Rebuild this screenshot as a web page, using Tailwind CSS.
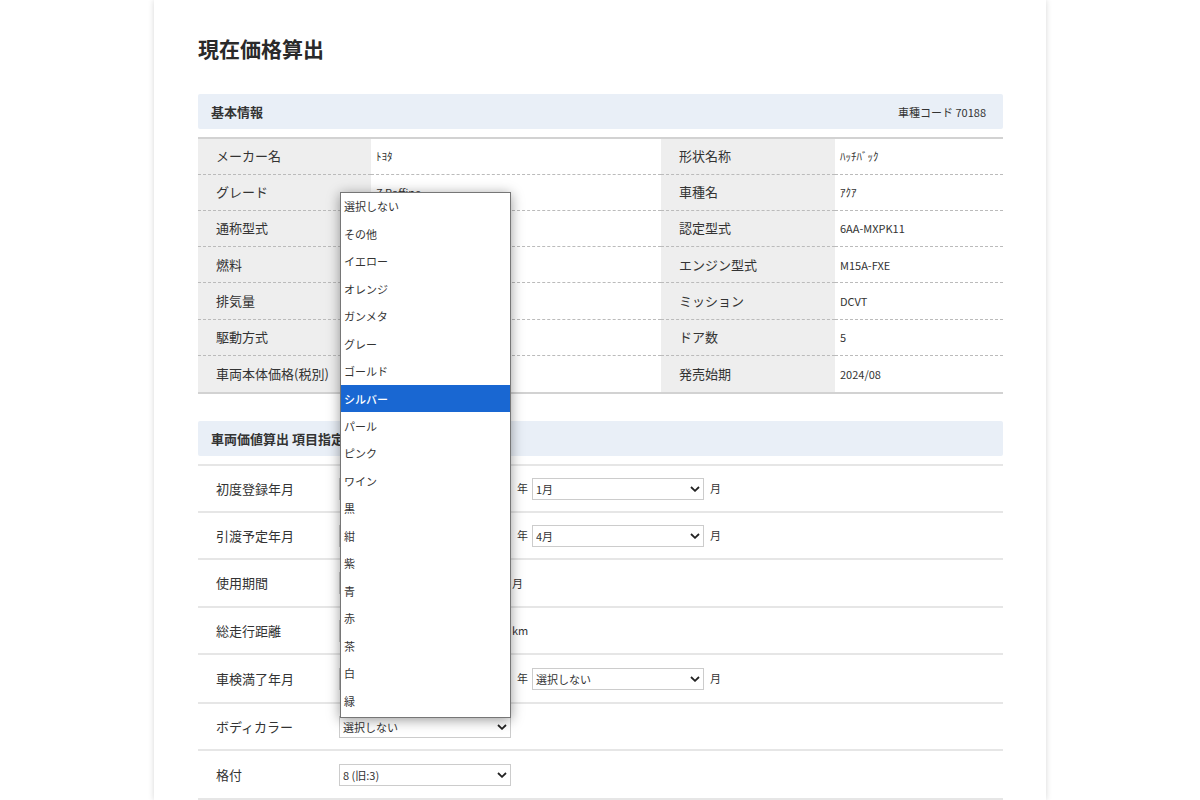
<!DOCTYPE html>
<html lang="ja">
<head>
<meta charset="utf-8">
<meta name="viewport" content="width=device-width, initial-scale=1">
<title>現在価格算出</title>
<script src="https://cdn.jsdelivr.net/npm/@tailwindcss/browser@4"></script>
</head>
<body class="bg-white font-['Noto_Sans_CJK_JP',sans-serif] text-[#333] text-[11px] leading-4">
<svg class="hidden"><symbol id="chevron" viewBox="0 0 10 6"><path d="M1 1l4 3.8L9 1" fill="none" stroke="#222" stroke-width="1.8"/></symbol></svg>
<main class="mx-auto max-w-[892px] overflow-hidden pl-11 pr-[43px] pt-8 shadow-[0_0_6px_rgba(0,0,0,0.16)]">
  <h1 class="text-[21px] leading-8 font-bold text-[#2a2a2a]">現在価格算出</h1>

  <section class="mt-[30px]">
    <div class="flex h-[35px] items-center justify-between rounded-xs bg-[#e9eff7] pl-[13px] pr-[17px]">
      <h2 class="text-[13px] font-bold">基本情報</h2>
      <p>車種コード 70188</p>
    </div>
    <table class="mt-2 h-[257px] w-full table-fixed border-collapse border-y-2 border-[#d2d2d2] text-left">
      <colgroup><col class="w-[173px]"><col><col class="w-[174px]"><col class="w-[168px]"></colgroup>
      <tbody class="[&_th]:bg-[#eeeeee] [&_th]:pl-[18px] [&_th]:text-[13px] [&_th]:font-normal [&_td]:pl-[5px] [&_tr]:border-b [&_tr]:border-dashed [&_tr]:border-[#bbb] [&_tr:last-child]:border-b-2 [&_tr:last-child]:border-solid [&_tr:last-child]:border-[#d2d2d2]">
        <tr class="h-9"><th scope="row">メーカー名</th><td>ﾄﾖﾀ</td><th scope="row">形状名称</th><td>ﾊｯﾁﾊﾞｯｸ</td></tr>
        <tr><th scope="row">グレード</th><td>Z Raffine</td><th scope="row">車種名</th><td>ｱｸｱ</td></tr>
        <tr><th scope="row">通称型式</th><td></td><th scope="row">認定型式</th><td>6AA-MXPK11</td></tr>
        <tr><th scope="row">燃料</th><td></td><th scope="row">エンジン型式</th><td>M15A-FXE</td></tr>
        <tr><th scope="row">排気量</th><td></td><th scope="row">ミッション</th><td>DCVT</td></tr>
        <tr><th scope="row">駆動方式</th><td></td><th scope="row">ドア数</th><td>5</td></tr>
        <tr><th scope="row">車両本体価格(税別)</th><td></td><th scope="row">発売始期</th><td>2024/08</td></tr>
      </tbody>
    </table>
  </section>

  <section class="mt-[27px]">
    <div class="flex h-[35px] items-center rounded-xs bg-[#e9eff7] pl-[13px]">
      <h2 class="text-[13px] font-bold">車両価値算出 項目指定</h2>
    </div>
    <form class="mt-2 border-t-2 border-[#e6e6e6] [&>div]:flex [&>div]:items-center [&>div]:border-b-2 [&>div]:border-[#e6e6e6] [&>div>label]:w-[141px] [&>div>label]:shrink-0 [&>div>label]:pl-[18px] [&>div>label]:text-[13px] [&_select]:h-[22px] [&_select]:w-full [&_select]:appearance-none [&_select]:border [&_select]:border-[#ccc] [&_select]:bg-white [&_select]:pl-[3px] [&_input]:h-[22px] [&_input]:w-[172px] [&_input]:border [&_input]:border-[#ccc] [&_input]:pl-[3px]">
      <div class="h-[47px]">
        <label for="reg-year">初度登録年月</label>
        <span class="relative w-[172px]"><select id="reg-year"><option></option></select></span>
        <span class="mx-1 pb-[2px] pl-[2px]">年</span>
        <span class="relative w-[172px]"><select aria-label="初度登録月"><option>1月</option></select><svg class="pointer-events-none absolute right-1 top-2 h-[6px] w-[10px]"><use href="#chevron"/></svg></span>
        <span class="ml-[6px] pb-[2px]">月</span>
      </div>
      <div class="h-[47px]">
        <label for="del-year">引渡予定年月</label>
        <span class="relative w-[172px]"><select id="del-year"><option></option></select></span>
        <span class="mx-1 pb-[2px] pl-[2px]">年</span>
        <span class="relative w-[172px]"><select aria-label="引渡予定月"><option>4月</option></select><svg class="pointer-events-none absolute right-1 top-2 h-[6px] w-[10px]"><use href="#chevron"/></svg></span>
        <span class="ml-[6px] pb-[2px]">月</span>
      </div>
      <div class="h-[48px]">
        <label for="period">使用期間</label>
        <input id="period" type="text"><span class="ml-px">月</span>
      </div>
      <div class="h-[47px]">
        <label for="mileage">総走行距離</label>
        <input id="mileage" type="text"><span class="ml-px pb-[2px]">km</span>
      </div>
      <div class="h-[49px]">
        <label for="insp-year">車検満了年月</label>
        <span class="relative w-[172px]"><select id="insp-year"><option></option></select></span>
        <span class="mx-1 pb-[2px] pl-[2px]">年</span>
        <span class="relative w-[172px]"><select aria-label="車検満了月"><option>選択しない</option></select><svg class="pointer-events-none absolute right-1 top-2 h-[6px] w-[10px]"><use href="#chevron"/></svg></span>
        <span class="ml-[6px] pb-[2px]">月</span>
      </div>
      <div class="h-[47px]">
        <label for="color">ボディカラー</label>
        <span class="relative w-[172px]"><select id="color"><option>選択しない</option></select><svg class="pointer-events-none absolute right-1 top-2 h-[6px] w-[10px]"><use href="#chevron"/></svg>
          <!-- Open list of body colours -->
          <ul role="listbox" aria-label="ボディカラー" class="absolute bottom-5 left-px z-10 grid h-[526px] w-[171px] auto-rows-fr border border-[#767676] bg-white pb-[2px] shadow-[0_2px_12px_rgba(0,0,0,0.4)] [&>li]:flex [&>li]:items-center [&>li]:pl-[3px]">
            <li role="option">選択しない</li>
            <li role="option">その他</li>
            <li role="option">イエロー</li>
            <li role="option">オレンジ</li>
            <li role="option">ガンメタ</li>
            <li role="option">グレー</li>
            <li role="option">ゴールド</li>
            <li role="option" aria-selected="true" class="bg-[#1967d2] font-medium text-white">シルバー</li>
            <li role="option">パール</li>
            <li role="option">ピンク</li>
            <li role="option">ワイン</li>
            <li role="option">黒</li>
            <li role="option">紺</li>
            <li role="option">紫</li>
            <li role="option">青</li>
            <li role="option">赤</li>
            <li role="option">茶</li>
            <li role="option">白</li>
            <li role="option">緑</li>
          </ul>
        </span>
      </div>
      <div class="h-[49px]">
        <label for="grade">格付</label>
        <span class="relative w-[172px]"><select id="grade"><option>8 (旧:3)</option></select><svg class="pointer-events-none absolute right-1 top-2 h-[6px] w-[10px]"><use href="#chevron"/></svg></span>
      </div>
    </form>
  </section>
</main>
</body>
</html>
